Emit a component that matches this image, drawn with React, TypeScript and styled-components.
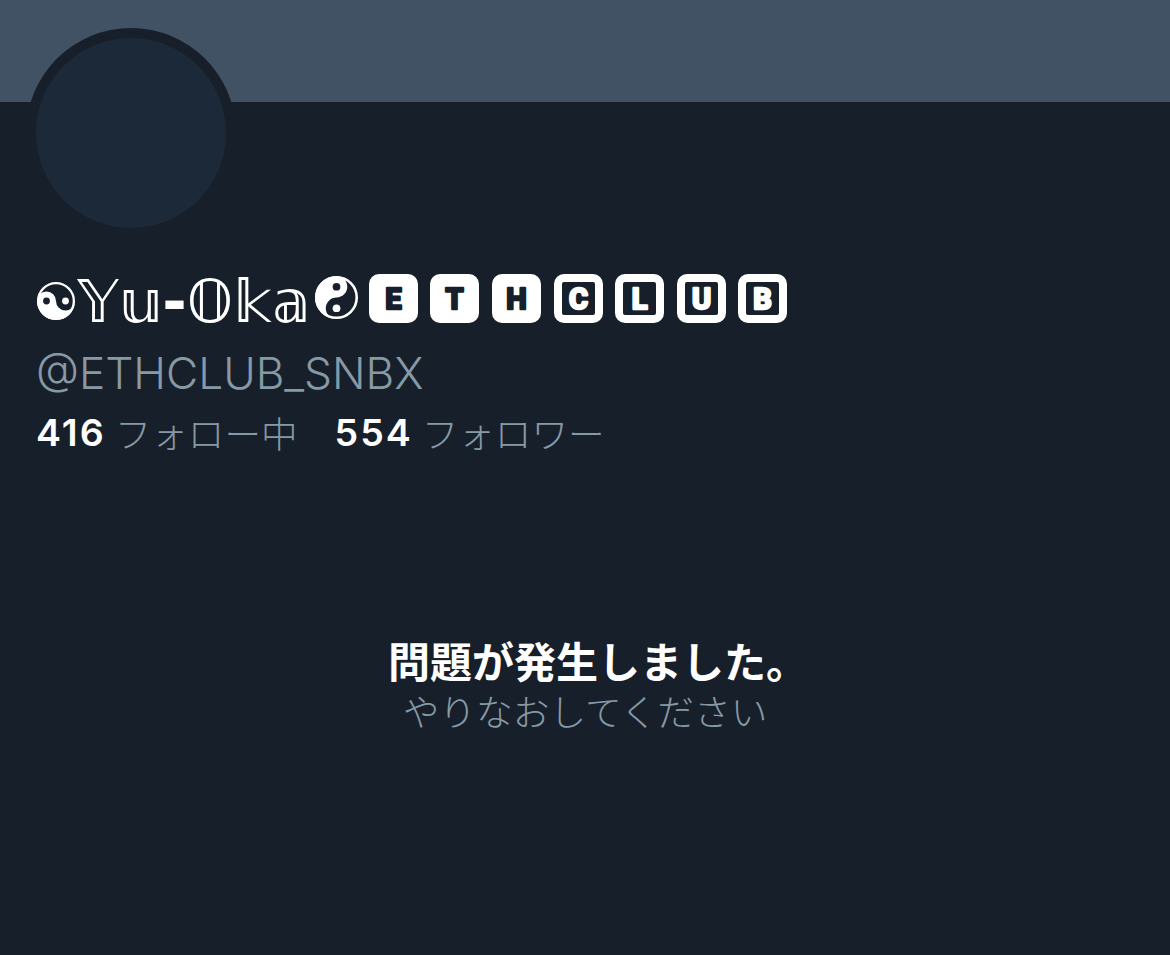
import React from 'react';
import styled, { createGlobalStyle } from 'styled-components';

const GlobalStyle = createGlobalStyle`
  html, body {
    margin: 0;
    padding: 0;
    background: #17202a;
  }
`;

const Page = styled.div`
  width: 1170px;
  height: 955px;
  overflow: hidden;
  background: #17202a;
  color: #fff;
  font-family: Inter, "Noto Sans CJK JP", sans-serif;
`;

const Banner = styled.div`
  height: 102px;
  background: #425265;
`;

const Profile = styled.div`
  padding: 0 36px;
`;

const Avatar = styled.div`
  width: 190px;
  height: 190px;
  margin-top: -64px;
  position: relative;
  border-radius: 50%;
  background: #1c2938;
  box-shadow: 0 0 0 10px #17202a;
`;

const NameRow = styled.div`
  display: flex;
  align-items: flex-end;
  height: 50px;
  margin-top: 45px;
`;

const Name = styled.span`
  font-family: "DejaVu Sans", sans-serif;
  font-size: 59px;
  line-height: 60px;
  color: #fff;
  white-space: nowrap;
  margin: 0 0 -9px 2px;
`;

const Dash = styled.span`
  font-weight: 700;
`;

const Symbol = styled.svg<{ $size: number; $lift: number; $left: number }>`
  flex: none;
  width: ${p => p.$size}px;
  height: ${p => p.$size}px;
  margin-left: ${p => p.$left}px;
  margin-bottom: ${p => p.$lift}px;
`;

const Tiles = styled.div`
  display: flex;
  gap: 12.6px;
  margin-left: 11px;
`;

const Tile = styled.div<{ $outlined?: boolean }>`
  width: 49px;
  height: 49px;
  box-sizing: border-box;
  display: flex;
  align-items: center;
  justify-content: center;
  border-radius: 10px;
  background: ${p => (p.$outlined ? '#17202a' : '#fff')};
  color: ${p => (p.$outlined ? '#fff' : '#17202a')};
  border: ${p => (p.$outlined ? '8px solid #fff' : 'none')};
`;

const TileArt = styled.svg`
  flex: none;
  width: 33px;
  height: 33px;
  overflow: visible;
`;

// rounded stroke gives the letters their soft corners
const TileLetter = styled.text`
  font-family: Roboto, sans-serif;
  font-weight: 700;
  font-size: 29px;
  fill: currentColor;
  stroke: currentColor;
  stroke-width: 2.5px;
  stroke-linejoin: round;
  text-anchor: middle;
`;

const Handle = styled.div`
  margin-top: 25px;
  font-size: 44.2px;
  line-height: 50px;
  font-weight: 350;
  color: #8899a6;
`;

const Stats = styled.div`
  display: flex;
  gap: 37px;
  margin-top: 11px;
  line-height: 48px;
`;

const Stat = styled.div`
  display: flex;
  gap: 9px;
`;

const Count = styled.span`
  font-size: 37.5px;
  font-weight: 600;
  letter-spacing: 2px;
  color: #fff;
`;

const Label = styled.span`
  font-family: "Noto Sans CJK JP", sans-serif;
  font-weight: 300;
  font-size: 36.6px;
  color: #8899a6;
`;

const ErrorBox = styled.div`
  margin-top: 177px;
  text-align: center;
  font-family: "Noto Sans CJK JP", sans-serif;
`;

const ErrorTitle = styled.div`
  padding-left: 26px;
  font-size: 42px;
  line-height: 52px;
  font-weight: 700;
`;

const ErrorHint = styled.div`
  font-size: 36.7px;
  line-height: 48px;
  font-weight: 300;
  color: #8899a6;
`;

const letters: [string, boolean][] = [
  ['E', false],
  ['T', false],
  ['H', false],
  ['C', true],
  ['L', true],
  ['U', true],
  ['B', true],
];

export default function App() {
  return (
    <Page>
      <GlobalStyle />
      <Banner />
      <Profile>
        <Avatar />
        <NameRow>
          <Symbol viewBox="0 0 100 100" $size={38} $lift={3} $left={1}>
            <circle cx="50" cy="50" r="47" fill="none" stroke="#fff" strokeWidth="6" />
            <path d="M0 50A50 50 0 0 0 100 50A25 25 0 0 1 50 50A25 25 0 0 0 0 50Z" fill="#fff" />
            <circle cx="25" cy="50" r="9" fill="#17202a" />
            <circle cx="75" cy="50" r="9" fill="#fff" />
          </Symbol>
          <Name>𝕐𝕦<Dash>-</Dash>𝕆𝕜𝕒</Name>
          <Symbol viewBox="0 0 100 100" $size={43} $lift={4} $left={4}>
            <circle cx="50" cy="50" r="47" fill="none" stroke="#fff" strokeWidth="6" />
            <path d="M50 0A50 50 0 0 0 50 100A25 25 0 0 1 50 50A25 25 0 0 0 50 0Z" fill="#fff" />
            <circle cx="50" cy="25" r="9" fill="#17202a" />
            <circle cx="50" cy="75" r="9" fill="#fff" />
          </Symbol>
          <Tiles>
            {letters.map(([letter, outlined]) => (
              <Tile key={letter} $outlined={outlined}>
                <TileArt viewBox="0 0 33 33">
                  <TileLetter x="16.5" y="27">{letter}</TileLetter>
                </TileArt>
              </Tile>
            ))}
          </Tiles>
        </NameRow>
        <Handle>@ETHCLUB_SNBX</Handle>
        <Stats>
          <Stat>
            <Count>416</Count>
            <Label>フォロー中</Label>
          </Stat>
          <Stat>
            <Count>554</Count>
            <Label>フォロワー</Label>
          </Stat>
        </Stats>
        <ErrorBox>
          <ErrorTitle>問題が発生しました。</ErrorTitle>
          <ErrorHint>やりなおしてください</ErrorHint>
        </ErrorBox>
      </Profile>
    </Page>
  );
}
